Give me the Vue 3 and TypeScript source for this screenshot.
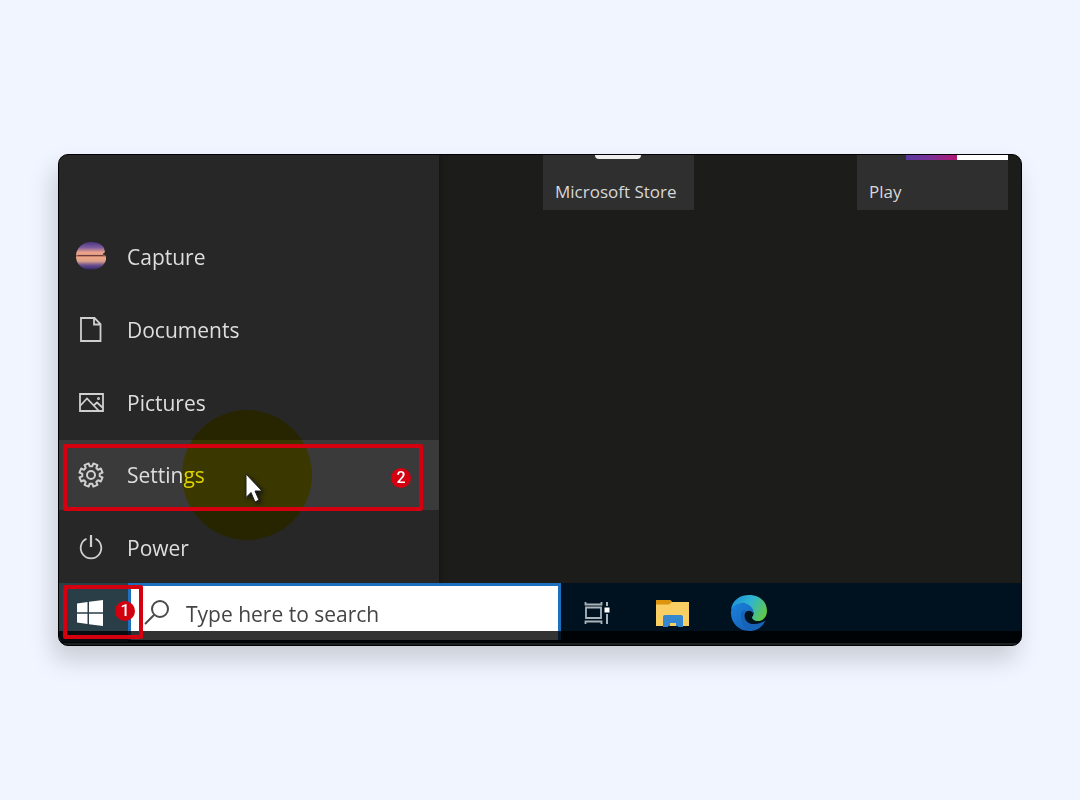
<script setup lang="ts">
import { ref } from 'vue'

type IconName = 'capture' | 'document' | 'picture' | 'gear' | 'power'

interface MenuEntry {
  label: string
  icon: IconName
  step?: number
}

const entries: MenuEntry[] = [
  { label: 'Capture', icon: 'capture' },
  { label: 'Documents', icon: 'document' },
  { label: 'Pictures', icon: 'picture' },
  { label: 'Settings', icon: 'gear', step: 2 },
  { label: 'Power', icon: 'power' },
]

const query = ref('')

// Outline of the cog: flat-topped teeth around the centre.
function gearPath(teeth: number, outer: number, inner: number): string {
  const points: string[] = []
  const step = (Math.PI * 2) / teeth
  for (let i = 0; i < teeth; i++) {
    const a = (i + 0.5) * step - Math.PI / 2
    const corners: [number, number][] = [
      [-0.32, inner],
      [-0.24, outer],
      [0.24, outer],
      [0.32, inner],
    ]
    for (const [offset, radius] of corners) {
      const t = a + offset * step
      points.push(`${(15 + Math.cos(t) * radius).toFixed(2)} ${(15 + Math.sin(t) * radius).toFixed(2)}`)
    }
  }
  return `M${points.join('L')}Z`
}

const gear = gearPath(8, 11.8, 8.8)
</script>

<template>
  <main class="page">
    <section class="screen">
      <div class="start">
        <nav class="sidebar" aria-label="Start menu">
          <ul class="menu">
            <li v-for="entry in entries" :key="entry.label" :class="{ active: entry.step }">
              <button type="button" class="entry">
                <svg class="icon" viewBox="0 0 30 30" aria-hidden="true">
                  <template v-if="entry.icon === 'capture'">
                    <defs>
                      <linearGradient id="dusk" x1="0" y1="0" x2="0" y2="1">
                        <stop offset="0" stop-color="#4b3585" />
                        <stop offset=".2" stop-color="#7d5c9c" />
                        <stop offset=".38" stop-color="#eca38b" />
                        <stop offset=".46" stop-color="#e39a80" />
                        <stop offset=".5" stop-color="#8b5348" />
                        <stop offset=".55" stop-color="#f0a783" />
                        <stop offset=".7" stop-color="#dba08d" />
                        <stop offset=".84" stop-color="#69508f" />
                        <stop offset="1" stop-color="#352766" />
                      </linearGradient>
                    </defs>
                    <path
                      d="M15 0C20 0 26 2 28 6L29 10L27 12L30 14C31 19 28 24 23 26C19 28 11 28 7 26C2 23 0 19 0 14C0 6 7 0 15 0Z"
                      fill="url(#dusk)"
                    />
                    <path d="M2 13.500H27L28 11" fill="none" stroke="#5c3438" stroke-width=".8" />
                  </template>
                  <g v-else fill="none" stroke="#cfcfcf" stroke-width="1.8">
                    <path v-if="entry.icon === 'document'" d="M5 3H18.500L24.500 9V26H5ZM18 3V9.500H24.500" />
                    <template v-else-if="entry.icon === 'picture'">
                      <path d="M4 6H27V23H4Z" />
                      <path d="M4 18L11 10.500L23 23M17 18L21 14.500L27 20" />
                      <circle cx="22.500" cy="10.500" r=".6" />
                    </template>
                    <template v-else-if="entry.icon === 'gear'">
                      <path :d="gear" stroke-width="2" stroke-linejoin="round" />
                      <circle cx="15" cy="15" r="4" stroke-width="2" />
                    </template>
                    <template v-else>
                      <path d="M10.500 5.800A10.300 10.300 0 1 0 19.500 5.800" />
                      <path d="M15 2V14" stroke-width="2.200" />
                    </template>
                  </g>
                </svg>
                <span>{{ entry.label }}</span>
              </button>
              <template v-if="entry.step">
                <span class="halo"></span>
                <svg class="pointer" viewBox="0 0 18 32" aria-hidden="true">
                  <path d="M1 1V24.500L6 19.500L10 29L14 27L10 18H17Z" fill="#fff" stroke="#24201c" stroke-width="1" />
                </svg>
                <span class="mark mark-entry"><b class="badge">{{ entry.step }}</b></span>
              </template>
            </li>
          </ul>
        </nav>
        <div class="tiles">
          <button type="button" class="tile">
            <span class="store-art"></span>
            Microsoft Store
          </button>
          <button type="button" class="tile">
            <span class="play-art"></span>
            Play
          </button>
        </div>
      </div>

      <footer class="taskbar">
        <button type="button" class="start-button" aria-label="Start">
          <svg viewBox="0 0 26 26" aria-hidden="true">
            <path fill="#fff" d="M0 3.500L10.500 2V12.200H0ZM12 1.800L26 0V12.200H12ZM0 13.700H10.500V24L0 22.500ZM12 13.700H26V26L12 24.200Z" />
          </svg>
        </button>
        <label class="search">
          <svg viewBox="0 0 28 28" aria-hidden="true">
            <g fill="none" stroke="#4a4a4a" stroke-width="2">
              <circle cx="17" cy="10" r="8" />
              <path d="M11 16L2 25" />
            </g>
          </svg>
          <input v-model="query" type="text" placeholder="Type here to search" aria-label="Type here to search" />
        </label>
        <div class="apps">
          <button type="button" aria-label="Task view">
            <svg class="task-view" viewBox="0 0 26 24" aria-hidden="true">
              <g fill="none" stroke="#a9b4bb" stroke-width="1.800">
                <path d="M2 6.500H17V17H2ZM1.500 1V3.500H17.500V1M1.500 23V20.500H17.500V23" />
                <path d="M23 1V5M23 13V23" stroke-width="2" />
              </g>
              <path d="M20.500 6.500H25.500V11.500H20.500Z" fill="#fff" />
            </svg>
          </button>
          <button type="button" aria-label="File Explorer">
            <svg class="folder" viewBox="0 0 34 28" aria-hidden="true">
              <path d="M0 1H14L16 3H33V27H0Z" fill="#f9cf63" />
              <path d="M0 1H14L16 3L13 5.500H0Z" fill="#dc940f" />
              <path d="M7 28V18Q7 16 9 16H25Q27 16 27 18V28H22V21H12V28Z" fill="#3587cf" />
              <path d="M12 21H22V27H20V24H14V27H12Z" fill="#3587cf" />
            </svg>
          </button>
          <button type="button" aria-label="Microsoft Edge">
            <svg class="edge" viewBox="0 0 38 38" aria-hidden="true">
              <defs>
                <linearGradient id="edge-top" x1="0" y1=".2" x2="1" y2=".6">
                  <stop offset="0" stop-color="#1c8fdc" />
                  <stop offset=".5" stop-color="#2fb5cf" />
                  <stop offset="1" stop-color="#62c84a" />
                </linearGradient>
                <linearGradient id="edge-base" x1="0" y1="0" x2="1" y2="1">
                  <stop offset="0" stop-color="#1a82dc" />
                  <stop offset="1" stop-color="#1559ad" />
                </linearGradient>
              </defs>
              <path d="M1 16C2 7 9 1 19 1C30 1 37 8 37 17C37 23 33 27 28 27C24 27 22 25 22 23C24 21 24 18 22 15C17 7 7 8 1 16Z" fill="url(#edge-top)" />
              <path d="M1 17C3 10 11 8 17 10C21 12 24 15 23 19C21 16 17 16 15 19C12 25 18 31 25 30C29 30 33 28 35 27C32 34 26 37 19 37C9 37 0 29 1 17Z" fill="url(#edge-base)" />
              <path d="M11 22C11 18 13 16 16 16C13 20 14 27 20 30C25 32 31 29 35 27C31 35 24 37 19 36C14 34 11 28 11 22Z" fill="#1763b8" />
            </svg>
          </button>
        </div>
        <span class="mark mark-start"><b class="badge">1</b></span>
      </footer>
    </section>
  </main>
</template>

<style>
body {
  margin: 0;
  background: #f0f5ff;
}
</style>

<style scoped>
.page {
  box-sizing: border-box;
  min-height: 100vh;
  display: grid;
  align-items: center;
  padding: 32px 58px;
  font-family: 'Open Sans', 'Noto Sans', sans-serif;
}
.screen {
  border: 1px solid #000;
  border-radius: 10px;
  overflow: hidden;
  background: #1c1c1b;
  box-shadow: -5px 14px 24px rgba(0, 0, 0, 0.17);
}
button {
  border: 0;
  margin: 0;
  padding: 0;
  background: none;
  color: inherit;
  font: inherit;
}
.start {
  display: flex;
}
.sidebar {
  flex: 0 0 380px;
  padding-top: 67px;
  background: #272727;
  box-shadow: 0 0 6px #111;
}
.menu {
  display: flex;
  flex-direction: column;
  justify-content: space-between;
  height: 361px;
  margin: 0;
  padding: 0;
  list-style: none;
}
.menu li {
  position: relative;
}
.active {
  background: #3a3a3a;
}
.entry {
  display: flex;
  align-items: center;
  gap: 21px;
  width: 100%;
  height: 70px;
  padding: 0 17px;
  color: #dedede;
  font-size: 21px;
  text-align: left;
}
.icon {
  width: 30px;
  height: 30px;
}
.halo {
  position: absolute;
  top: -30px;
  left: 123px;
  width: 130px;
  height: 130px;
  border-radius: 50%;
  background: #fff000;
  mix-blend-mode: multiply;
}
.pointer {
  position: absolute;
  top: 33px;
  left: 186px;
  width: 18px;
  height: 32px;
  filter: drop-shadow(2px 2px 2px #111);
}
.mark {
  position: absolute;
  box-sizing: border-box;
  display: flex;
  align-items: center;
  justify-content: flex-end;
  border: 4px solid #d4000f;
  border-radius: 2px;
  pointer-events: none;
}
.mark-entry {
  top: 4px;
  left: 4px;
  width: 360px;
  height: 67px;
  padding-right: 8px;
}
.mark-start {
  z-index: 1;
  top: 2px;
  left: 4px;
  width: 80px;
  height: 54px;
  padding: 0 4px 2px 0;
}
.badge {
  width: 20px;
  height: 20px;
  border-radius: 50%;
  background: #d4000f;
  color: #fff;
  font: 500 16px/20px Roboto, sans-serif;
  text-align: center;
}
.tiles {
  flex: 1;
  display: flex;
  align-items: flex-start;
  justify-content: space-between;
  padding: 0 13px 0 104px;
}
.tile {
  position: relative;
  width: 151px;
  height: 55px;
  padding: 18px 12px 0;
  background: #2f2f2f;
  color: #d8d8d8;
  font-size: 17px;
  line-height: 24px;
  text-align: left;
  white-space: nowrap;
}
.store-art {
  position: absolute;
  top: 0;
  left: 52px;
  width: 46px;
  height: 4px;
  border-radius: 0 0 8px 8px;
  background: #eee;
}
.play-art {
  position: absolute;
  top: 0;
  right: 0;
  width: 102px;
  height: 5px;
  background: linear-gradient(90deg, #5a3a9e, #7c2f96 25%, #b31672 50%, #fff 50%);
}
.taskbar {
  position: relative;
  display: flex;
  height: 62px;
  background: #00121f;
}
.taskbar::after {
  content: '';
  position: absolute;
  inset: 48px 0 0;
  background: rgba(0, 0, 0, 0.8);
  border-bottom: 2px solid #1c2022;
  box-sizing: border-box;
}
.start-button {
  flex: 0 0 69px;
  height: 59px;
  padding-left: 18px;
  background: #2a3e48;
  text-align: left;
}
.start-button svg {
  display: block;
  width: 26px;
  height: 26px;
}
.search {
  box-sizing: border-box;
  flex: 0 1 433px;
  display: flex;
  align-items: center;
  gap: 15px;
  height: 57px;
  padding: 0 12px;
  border: 3px solid #1c70bd;
  border-bottom: 0;
  background: #fff;
}
.search svg {
  flex: none;
  width: 28px;
  height: 28px;
}
.search input {
  flex: 1;
  min-width: 0;
  border: 0;
  padding: 2px 0 0;
  outline: 0;
  background: transparent;
  color: #444;
  font: inherit;
  font-size: 21px;
}
.search input::placeholder {
  color: #444;
  opacity: 1;
}
.apps {
  display: flex;
  align-items: center;
  gap: 4px;
  height: 60px;
}
.apps button {
  display: grid;
  place-items: center;
  width: 72px;
  height: 60px;
}
.apps svg {
  display: block;
}
.task-view {
  width: 26px;
  height: 24px;
}
.folder {
  width: 34px;
  height: 28px;
}
.edge {
  width: 38px;
  height: 38px;
}
</style>
